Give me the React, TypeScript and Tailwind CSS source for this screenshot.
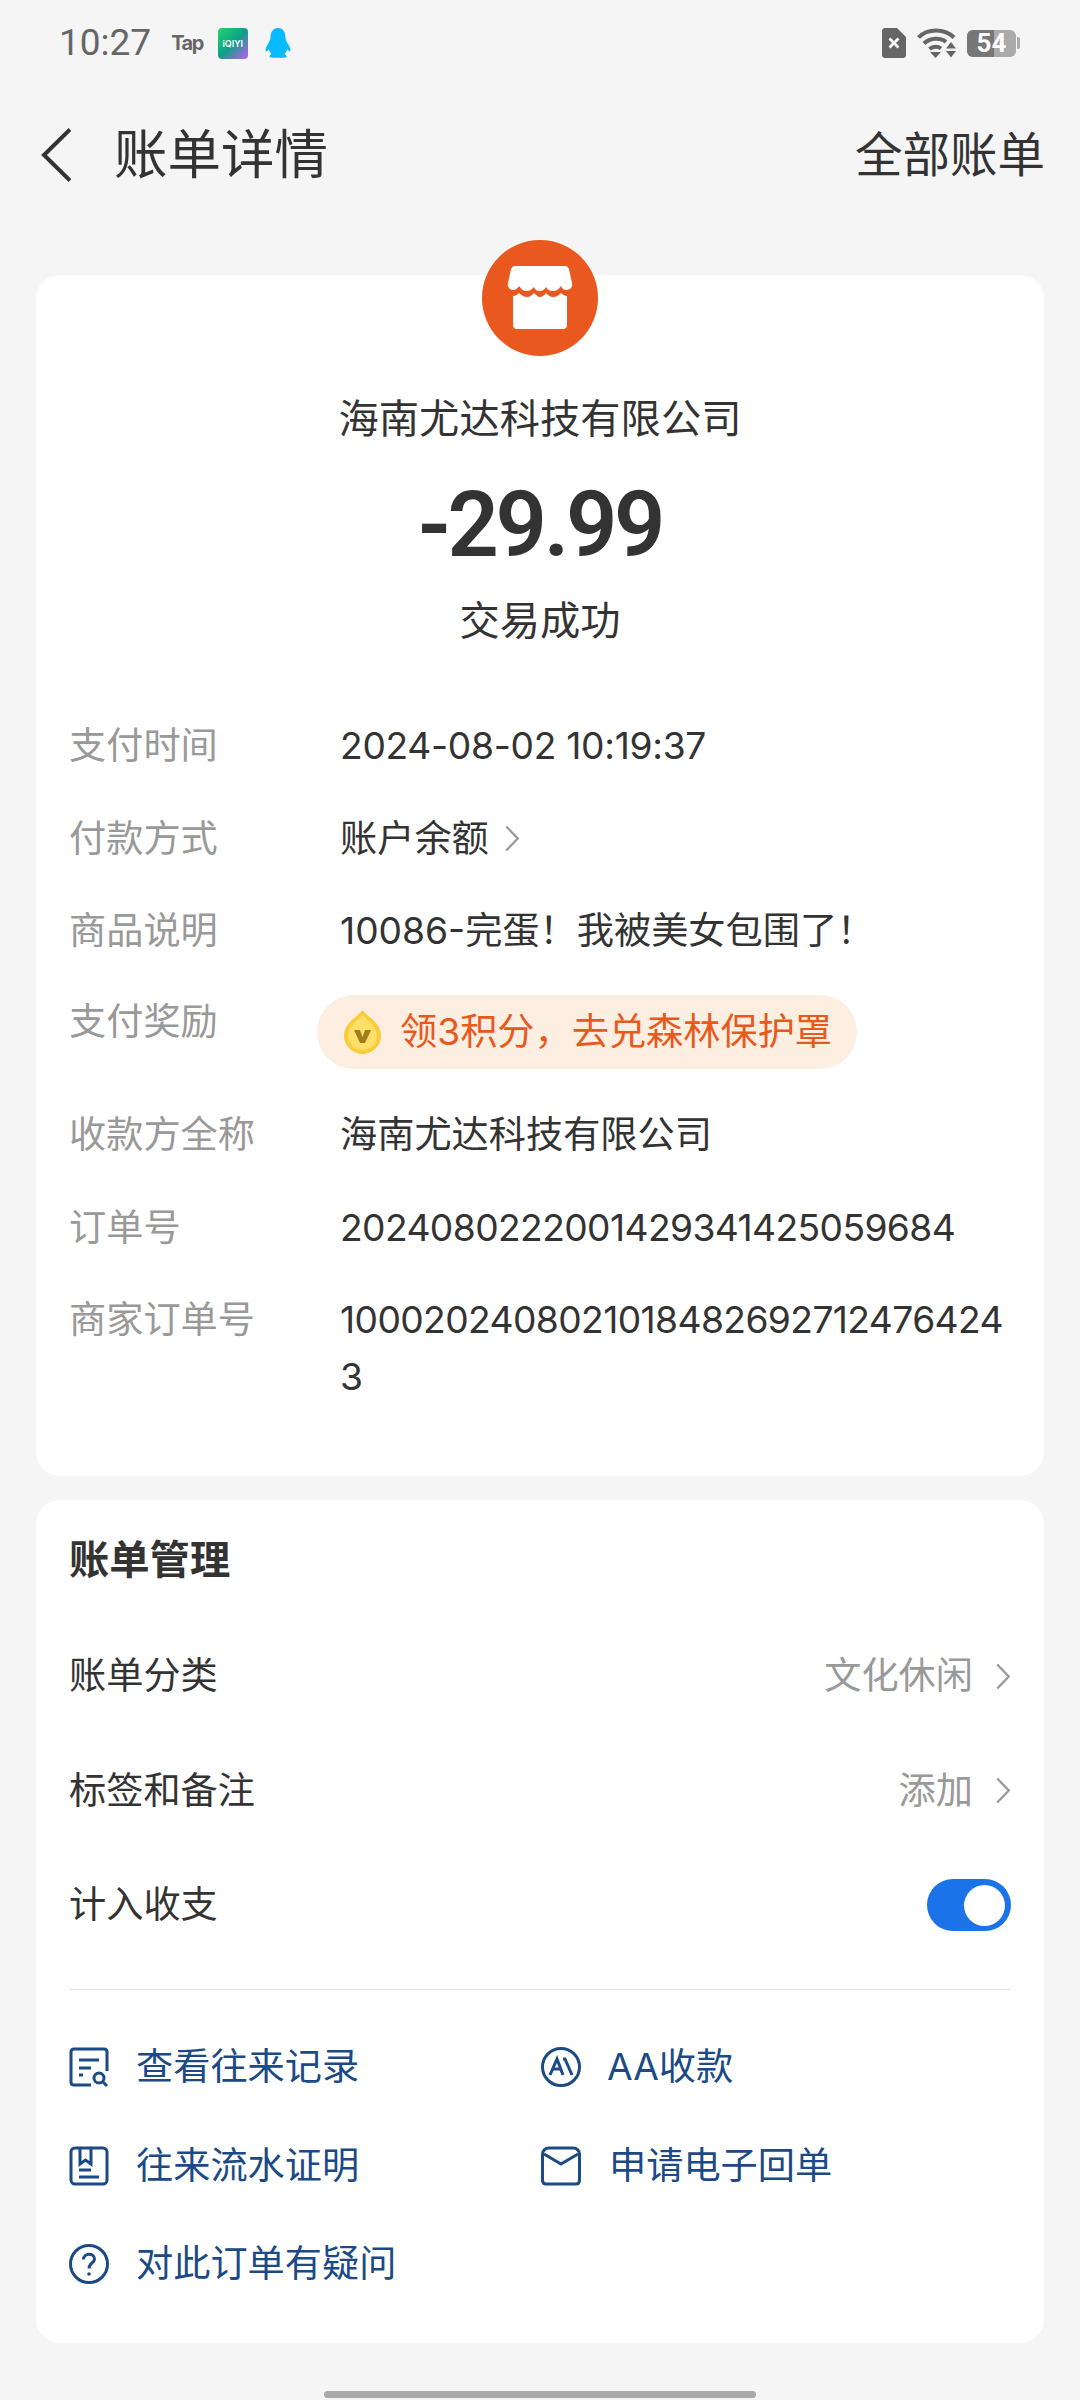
import React from "react";

const Chevron = ({ className }: { className: string }) => (
  <svg viewBox="0 0 16 28" className={className} fill="none" stroke="currentColor" strokeWidth="2.4">
    <path d="M2 1.5 L14 14 L2 26.5" />
  </svg>
);

const Row = ({ label, children, labelClass = "" }: { label: string; children: React.ReactNode; labelClass?: string }) => (
  <div className="grid grid-cols-[271px_1fr] leading-[57px]">
    <div className={`text-[#999999] ${labelClass}`}>{label}</div>
    <div className="text-[#333333]">{children}</div>
  </div>
);

const Nav = ({ label, value }: { label: string; value: string }) => (
  <div className="flex h-[114.5px] items-center justify-between">
    <span className="text-[#333333]">{label}</span>
    <span className="flex items-center text-[#999999]">
      {value}
      <Chevron className="ml-[22px] h-[27px] w-[16px]" />
    </span>
  </div>
);

const Link = ({ icon, text, gap }: { icon: React.ReactNode; text: string; gap: string }) => (
  <div className={`flex h-[98.5px] items-center ${gap} text-[#1b4a85]`}>
    {icon}
    <span>{text}</span>
  </div>
);

const iconBase = "h-[40px] w-[40px] shrink-0";

export default function App() {
  return (
    <div className="min-h-[2400px] w-[1080px] overflow-hidden bg-[#f5f5f5] font-['Inter','Noto_Sans_CJK_SC',sans-serif] text-[37.2px]">
      {/* Status bar */}
      <div className="flex h-[86px] items-center pl-[59px] pr-[60px]">
        <span className="font-['Roboto',sans-serif] text-[37px] leading-[40px] text-[#666666]">10:27</span>
        <span className="ml-[20px] font-['Inter',sans-serif] text-[20px] font-bold leading-[20px] tracking-[-1.5px] text-[#666666]">Tap</span>
        <span className="ml-[15px] flex h-[31px] w-[30px] items-center justify-center rounded-[4px] bg-[linear-gradient(135deg,#1fd86a_0%,#0f9f8a_50%,#c05cf0_100%)] font-['Inter',sans-serif] text-[9px] font-semibold leading-none text-white">
          iQIYI
        </span>
        <svg viewBox="0 0 26 30" className="ml-[17px] h-[30px] w-[26px]" fill="#08baff">
          <path d="M13 0C7.6 0 5.6 4.5 5.5 9.5C5.4 11.5 4.8 12.8 3.5 15C1.8 17.8 0 21 0.6 23.5C1.6 23.8 3 22.5 3.8 21.3C4.4 23 5 24.6 6.5 26C5.2 26.6 4.2 27.6 4.5 29.2C4.8 30 21.2 30 21.5 29.2C21.8 27.6 20.8 26.6 19.5 26C21 24.6 21.6 23 22.2 21.3C23 22.5 24.4 23.8 25.4 23.5C26 21 24.2 17.8 22.5 15C21.2 12.8 20.6 11.5 20.5 9.5C20.4 4.5 18.4 0 13 0Z" />
        </svg>
        <div className="flex-1" />
        <svg viewBox="0 0 24 30" className="h-[30px] w-[24px]" fill="#666666">
          <path d="M3 0H15L24 9V27C24 28.7 22.7 30 21 30H3C1.3 30 0 28.7 0 27V3C0 1.3 1.3 0 3 0Z" />
          <path d="M7.5 10.5L16.5 19.5M16.5 10.5L7.5 19.5" stroke="#ffffff" strokeWidth="2.8" />
        </svg>
        <svg viewBox="0 0 40 30" className="ml-[11px] h-[30px] w-[40px]" fill="none" stroke="#666666" strokeWidth="4">
          <path d="M1.5 9.5C10 0 28 0 37 9.5" />
          <path d="M7 15.5C13 9.5 24 9.5 29 14" />
          <path d="M12.5 21C16 18 21 18 24 20.5" />
          <path d="M13 24H24L18.5 30Z" fill="#666666" stroke="none" />
          <path d="M34 14L39 20.5H29Z" fill="#666666" stroke="none" />
          <path d="M29 23H39L34 29.5Z" fill="#666666" stroke="none" />
        </svg>
        <div className="relative ml-[10px] flex h-[27px] w-[49px] items-center justify-center overflow-hidden rounded-[6px] bg-[#aaaaaa] font-['Roboto',sans-serif] text-[26px] font-bold leading-none text-white">
          <div className="absolute inset-y-0 left-0 w-[27px] bg-[#777777]" />
          <span className="relative">54</span>
        </div>
        <div className="ml-[1px] h-[12px] w-[3px] rounded-r-[2px] bg-[#aaaaaa]" />
      </div>

      {/* Header */}
      <div className="flex h-[138px] items-center justify-between pl-[41px] pr-[35px] text-[#333333]">
        <div className="flex items-center">
          <svg viewBox="0 0 30 54" className="h-[54px] w-[30px]" fill="none" stroke="#333333" strokeWidth="4">
            <path d="M29 1.5L3 27L29 52.5" />
          </svg>
          <span className="ml-[43px] text-[53.5px] leading-[60px]">账单详情</span>
        </div>
        <span className="text-[47.5px] leading-[60px]">全部账单</span>
      </div>

      {/* Detail card */}
      <div className="mx-[36px] mt-[51px] flex flex-col rounded-[24px] bg-white px-[33px] pb-[71px]">
        <svg viewBox="0 0 116 116" className="mx-auto -mt-[35px] h-[116px] w-[116px]">
          <circle cx="58" cy="58" r="58" fill="#e9581e" />
          <path d="M33 26H83C85 26 86 27 87 29L90 43C91 47 88 50 85 50C81 50 80 48 79 46C77 49 75 51 71 51C67 51 65 49 64 47C62 50 60 51 58 51C55 51 53 50 52 47C50 49 48 51 45 51C41 51 39 49 37 46C36 48 34 50 31 50C28 50 25 47 26 43L29 29C30 27 31 26 33 26Z" fill="#ffffff" />
          <path d="M31 56C33 56 35 55 37 53C39 55 42 57 45 57C48 57 50 55 52 53C54 55 56 57 58 57C60 57 63 55 64 53C66 55 68 57 71 57C75 57 77 55 79 53C81 55 83 56 85 56V85C85 87 84 89 81 89H35C32 89 31 87 31 85Z" fill="#ffffff" />
        </svg>
        <div className="mt-[35px] text-center text-[40.3px] leading-[56px] text-[#333333]">海南尤达科技有限公司</div>
        <div className="mt-[29px] text-center font-['Roboto',sans-serif] text-[90px] font-semibold leading-[100px] tracking-[-3.3px] text-[#333333]">-29.99</div>
        <div className="mt-[17px] text-center text-[40.3px] leading-[56px] text-[#333333]">交易成功</div>

        <div className="mt-[68px] flex flex-col gap-[35.5px]">
          <Row label="支付时间">
            <span className="tracking-[-0.3px]">2024-08-02 10:19:37</span>
          </Row>
          <Row label="付款方式">
            <span className="flex items-center">
              账户余额
              <Chevron className="ml-[15px] h-[27px] w-[16px] text-[#999999]" />
            </span>
          </Row>
          <Row label="商品说明">10086-完蛋！我被美女包围了！</Row>
          <Row label="支付奖励" labelClass="-mt-[2px]">
            <div className="-ml-[23px] mb-[2px] flex h-[74px] w-[540px] items-center rounded-full bg-[#fdeee2] pl-[27px] text-[#e8591c]">
              <svg viewBox="0 0 37 44" className="h-[44px] w-[37px]">
                <path d="M18.5 0C22 6 37 12 37 26C37 36 28 44 18.5 44C9 44 0 36 0 26C0 12 15 6 18.5 0Z" fill="#fbcb3a" />
                <path d="M18.5 5C22 10 33 15 33 26C33 34 26 40 18.5 40C11 40 4 34 4 26C4 15 15 10 18.5 5Z" fill="#fde06a" />
                <path d="M10 20H16L18.5 27L21 20H27L21 33H16Z" fill="#a27d1e" />
              </svg>
              <span className="ml-[19px]">领3积分，去兑森林保护罩</span>
            </div>
          </Row>
          <Row label="收款方全称">海南尤达科技有限公司</Row>
          <Row label="订单号">
            <span className="tracking-[-0.6px]">2024080222001429341425059684</span>
          </Row>
          <Row label="商家订单号">
            <span className="break-all tracking-[-0.6px]">10002024080210184826927124764243</span>
          </Row>
        </div>
      </div>

      {/* Manage card */}
      <div className="mx-[36px] mt-[24px] rounded-[24px] bg-white px-[33px] pb-[29px] pt-[32px]">
        <div className="text-[40.3px] font-bold leading-[56px] text-[#333333]">账单管理</div>
        <div className="mt-[31px]">
          <Nav label="账单分类" value="文化休闲" />
          <Nav label="标签和备注" value="添加" />
          <div className="flex h-[114px] items-center justify-between">
            <span className="text-[#333333]">计入收支</span>
            <div className="flex h-[52px] w-[84px] items-center justify-end rounded-full bg-[#1a73e8] pr-[6px]">
              <div className="h-[41px] w-[41px] rounded-full bg-white" />
            </div>
          </div>
        </div>
        <div className="mt-[27px] h-[1px] bg-[#e5e5e5]" />
        <div className="mt-[28px] grid grid-cols-[472px_1fr]">
          <Link
            gap="gap-[27px]"
            text="查看往来记录"
            icon={
              <svg viewBox="0 0 40 40" className={iconBase} fill="none" stroke="#1b4a85" strokeWidth="3">
                <path d="M22 38H5C3 38 2 37 2 35V5C2 3 3 2 5 2H35C37 2 38 3 38 5V24" />
                <path d="M10 13H30M10 21H22M10 28H14" />
                <circle cx="30" cy="31" r="5" />
                <path d="M34 35L38 39" />
              </svg>
            }
          />
          <Link
            gap="gap-[26px]"
            text="AA收款"
            icon={
              <svg viewBox="0 0 40 40" className={iconBase} fill="none" stroke="#1b4a85" strokeWidth="3">
                <circle cx="20" cy="20" r="18.5" />
                <path d="M9 28L16 12L22 28" />
                <path d="M12 22H19" />
                <path d="M22 12H24L31 28" />
              </svg>
            }
          />
          <Link
            gap="gap-[27px]"
            text="往来流水证明"
            icon={
              <svg viewBox="0 0 40 40" className={iconBase} fill="none" stroke="#1b4a85" strokeWidth="3">
                <rect x="2" y="2" width="36" height="36" rx="4" />
                <path d="M11 2V18L16.5 14L22 18V2" />
                <path d="M10 24H22M10 31H30" />
              </svg>
            }
          />
          <Link
            gap="gap-[28px]"
            text="申请电子回单"
            icon={
              <svg viewBox="0 0 40 40" className={iconBase} fill="none" stroke="#1b4a85" strokeWidth="3">
                <path d="M8 2H32C36 2 38.5 5 38.5 8V34C38.5 36.5 37 38 35 38H5C3 38 1.5 36.5 1.5 34V8C1.5 5 4 2 8 2Z" />
                <path d="M3 8L20 18L37 8" />
              </svg>
            }
          />
          <Link
            gap="gap-[27px]"
            text="对此订单有疑问"
            icon={
              <svg viewBox="0 0 40 40" className={iconBase} fill="none" stroke="#1b4a85" strokeWidth="3">
                <circle cx="20" cy="20" r="18.5" />
                <path d="M14.5 15.5C14.5 8.5 25.5 8.5 25.5 15C25.5 19 20 19 20 24.5" />
                <circle cx="20" cy="30" r="1.8" fill="#1b4a85" stroke="none" />
              </svg>
            }
          />
        </div>
      </div>

      {/* Home indicator */}
      <div className="mx-auto mt-[48px] h-[7px] w-[432px] rounded-full bg-[#aaaaaa]" />
    </div>
  );
}
